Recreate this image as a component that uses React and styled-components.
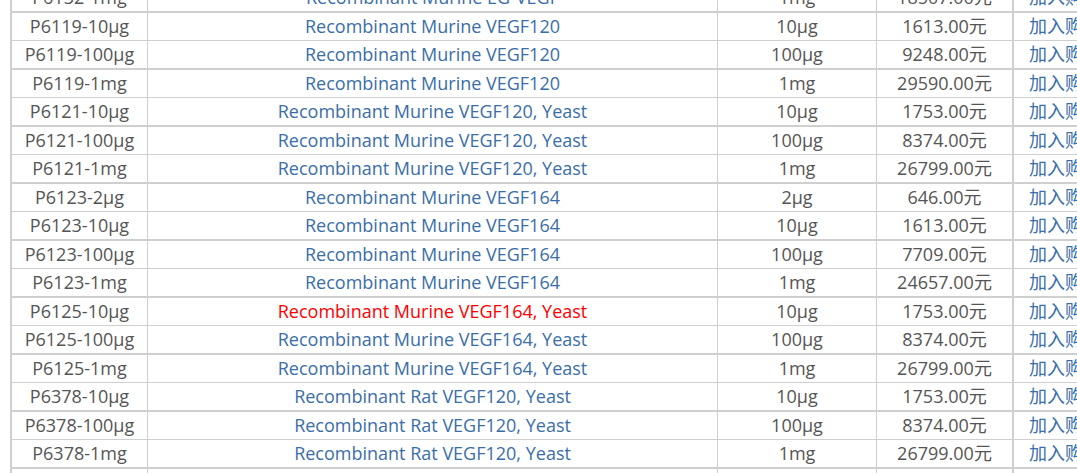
import React from "react";
import styled, { createGlobalStyle } from "styled-components";

const Global = createGlobalStyle`
  html, body { margin: 0; padding: 0; background: #fff; overflow: hidden; }
  body { font-family: "Open Sans", "Noto Sans CJK SC", sans-serif; }
`;

const Page = styled.div`
  padding-left: 10px;
  margin-top: -16px;
  width: 1200px;
`;

const Table = styled.table`
  border-collapse: separate;
  border-spacing: 0;
  border-left: 2px solid #cfcfcf;
  table-layout: fixed;
  width: 1150px;
  font-size: 18px;
`;

const Col = styled.col`
  width: ${(p) => p.$w}px;
`;

const Cell = styled.td`
  height: 27px;
  padding: 0;
  line-height: 27px;
  white-space: nowrap;
  overflow: hidden;
  border-right: ${(p) => (p.$thickRight ? 2 : 1)}px solid #cfcfcf;
  border-bottom: ${(p) => (p.$thick ? 2 : 1)}px solid #cfcfcf;
  text-align: ${(p) => (p.$left ? "left" : "center")};
  padding-left: ${(p) => (p.$left ? "15px" : "0")};
  color: ${(p) => p.$color || "#555"};
`;

const rows = [
  ["P6132-1mg", "Recombinant Murine EG-VEGF", "1mg", "18507.00元"],
  ["P6119-10μg", "Recombinant Murine VEGF120", "10μg", "1613.00元"],
  ["P6119-100μg", "Recombinant Murine VEGF120", "100μg", "9248.00元"],
  ["P6119-1mg", "Recombinant Murine VEGF120", "1mg", "29590.00元"],
  ["P6121-10μg", "Recombinant Murine VEGF120, Yeast", "10μg", "1753.00元"],
  ["P6121-100μg", "Recombinant Murine VEGF120, Yeast", "100μg", "8374.00元"],
  ["P6121-1mg", "Recombinant Murine VEGF120, Yeast", "1mg", "26799.00元"],
  ["P6123-2μg", "Recombinant Murine VEGF164", "2μg", "646.00元"],
  ["P6123-10μg", "Recombinant Murine VEGF164", "10μg", "1613.00元"],
  ["P6123-100μg", "Recombinant Murine VEGF164", "100μg", "7709.00元"],
  ["P6123-1mg", "Recombinant Murine VEGF164", "1mg", "24657.00元"],
  ["P6125-10μg", "Recombinant Murine VEGF164, Yeast", "10μg", "1753.00元", true],
  ["P6125-100μg", "Recombinant Murine VEGF164, Yeast", "100μg", "8374.00元"],
  ["P6125-1mg", "Recombinant Murine VEGF164, Yeast", "1mg", "26799.00元"],
  ["P6378-10μg", "Recombinant Rat VEGF120, Yeast", "10μg", "1753.00元"],
  ["P6378-100μg", "Recombinant Rat VEGF120, Yeast", "100μg", "8374.00元"],
  ["P6378-1mg", "Recombinant Rat VEGF120, Yeast", "1mg", "26799.00元"],
  ["", "", "", ""],
];

const BLUE = "#3a6ea8";

export default function App() {
  return (
    <>
      <Global />
      <Page>
        <Table>
          <colgroup>
            <Col $w={136} />
            <Col $w={570} />
            <Col $w={159} />
            <Col $w={137} />
            <Col $w={148} />
          </colgroup>
          <tbody>
            {rows.map((r, i) => {
              const thick = i % 2 === 0;
              return (
                <tr key={i}>
                  <Cell $thick={thick}>{r[0]}</Cell>
                  <Cell $thick={thick} $color={r[4] ? "#f00" : BLUE}>{r[1]}</Cell>
                  <Cell $thick={thick}>{r[2]}</Cell>
                  <Cell $thick={thick} $thickRight>{r[3]}</Cell>
                  <Cell $thick={thick} $left $color={BLUE}>{r[0] ? "加入购物车" : ""}</Cell>
                </tr>
              );
            })}
          </tbody>
        </Table>
      </Page>
    </>
  );
}
